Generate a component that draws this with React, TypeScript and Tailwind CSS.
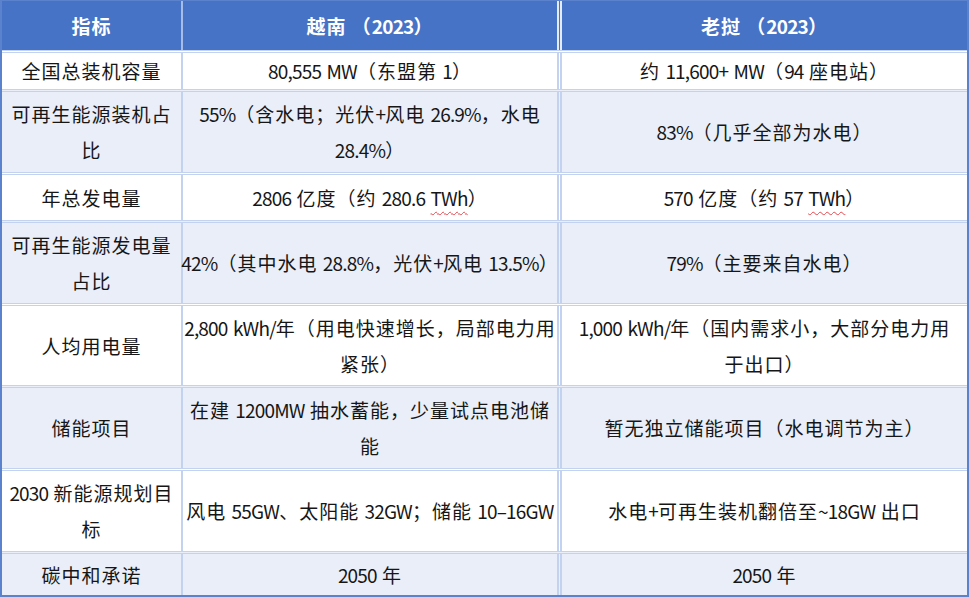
import React from "react"

type Row = {
  h: string
  bg: string
  label: React.ReactNode[]
  vn: React.ReactNode[]
  la: React.ReactNode[]
}

// latin runs are narrower in the source doc, so tighten them (spaces stay normal)
const LATIN = /([!-~–]+)/
function fmt(s: string) {
  return s.split(LATIN).map((p, i) =>
    i % 2 === 1 ? (
      <span key={i} className="tracking-[-0.8px]">
        {p}
      </span>
    ) : (
      <React.Fragment key={i}>{p}</React.Fragment>
    )
  )
}

const twh = (
  <span className="tracking-[-0.8px] underline decoration-wavy decoration-[#e5484d] decoration-1 underline-offset-[5px]">TWh</span>
)

const rows: Row[] = [
  {
    h: "h-[39px]",
    bg: "bg-white",
    label: ["全国总装机容量"],
    vn: ["80,555 MW（东盟第 1）"],
    la: ["约 11,600+ MW（94 座电站）"],
  },
  {
    h: "h-[83px]",
    bg: "bg-[#e9eef8]",
    label: ["可再生能源装机占", "比"],
    vn: ["55%（含水电；光伏+风电 26.9%，水电", "28.4%）"],
    la: ["83%（几乎全部为水电）"],
  },
  {
    h: "h-[48px]",
    bg: "bg-white",
    label: ["年总发电量"],
    vn: [<>{fmt("2806 亿度（约 280.6 ")}{twh}）</>],
    la: [<>{fmt("570 亿度（约 57 ")}{twh}）</>],
  },
  {
    h: "h-[83px]",
    bg: "bg-[#e9eef8]",
    label: ["可再生能源发电量", "占比"],
    vn: ["42%（其中水电 28.8%，光伏+风电 13.5%）"],
    la: ["79%（主要来自水电）"],
  },
  {
    h: "h-[82px]",
    bg: "bg-white",
    label: ["人均用电量"],
    vn: ["2,800 kWh/年（用电快速增长，局部电力用", "紧张）"],
    la: ["1,000 kWh/年（国内需求小，大部分电力用", "于出口）"],
  },
  {
    h: "h-[83px]",
    bg: "bg-[#e9eef8]",
    label: ["储能项目"],
    vn: ["在建 1200MW 抽水蓄能，少量试点电池储", "能"],
    la: ["暂无独立储能项目（水电调节为主）"],
  },
  {
    h: "h-[83px]",
    bg: "bg-white",
    label: ["2030 新能源规划目", "标"],
    vn: ["风电 55GW、太阳能 32GW；储能 10–16GW"],
    la: ["水电+可再生装机翻倍至~18GW 出口"],
  },
  {
    h: "flex-1",
    bg: "bg-[#e9eef8]",
    label: ["碳中和承诺"],
    vn: ["2050 年"],
    la: ["2050 年"],
  },
]

function Cell({ lines, className }: { lines: React.ReactNode[]; className?: string }) {
  return (
    <div className={`flex flex-col items-center justify-center text-center leading-[36px] whitespace-pre ${className ?? ""}`}>
      {lines.map((l, i) => (
        <div key={i}>{typeof l === "string" ? fmt(l) : l}</div>
      ))}
    </div>
  )
}

export default function App() {
  return (
    <div
      className="w-[969px] h-[597px] flex flex-col bg-white border-x-2 border-b-2 border-t border-[#5a82cd] text-[19px] tracking-[1px] text-[#161616]"
      style={{ fontFamily: '"Noto Sans CJK SC", "Noto Sans", sans-serif' }}
    >
      <div className="grid grid-cols-[179px_376px_1fr] h-[49px] bg-[#4673c6] text-white font-bold">
        <Cell lines={["指标"]} />
        <Cell lines={["越南 （2023）"]} className="border-l-2 border-[#a5bde8]" />
        <Cell lines={["老挝 （2023）"]} className="border-l-[5px] border-double border-[#e4ebf8]" />
      </div>
      {rows.map((r, i) => (
        <div
          key={i}
          className={`grid grid-cols-[179px_376px_1fr] ${r.h} ${r.bg} border-t-[3px] border-double border-[#c3d2ee]`}
        >
          <Cell lines={r.label} />
          <Cell lines={r.vn} className="border-l-2 border-[#c3d2ee]" />
          <Cell lines={r.la} className="border-l-[5px] border-double border-[#c3d2ee]" />
        </div>
      ))}
    </div>
  )
}
